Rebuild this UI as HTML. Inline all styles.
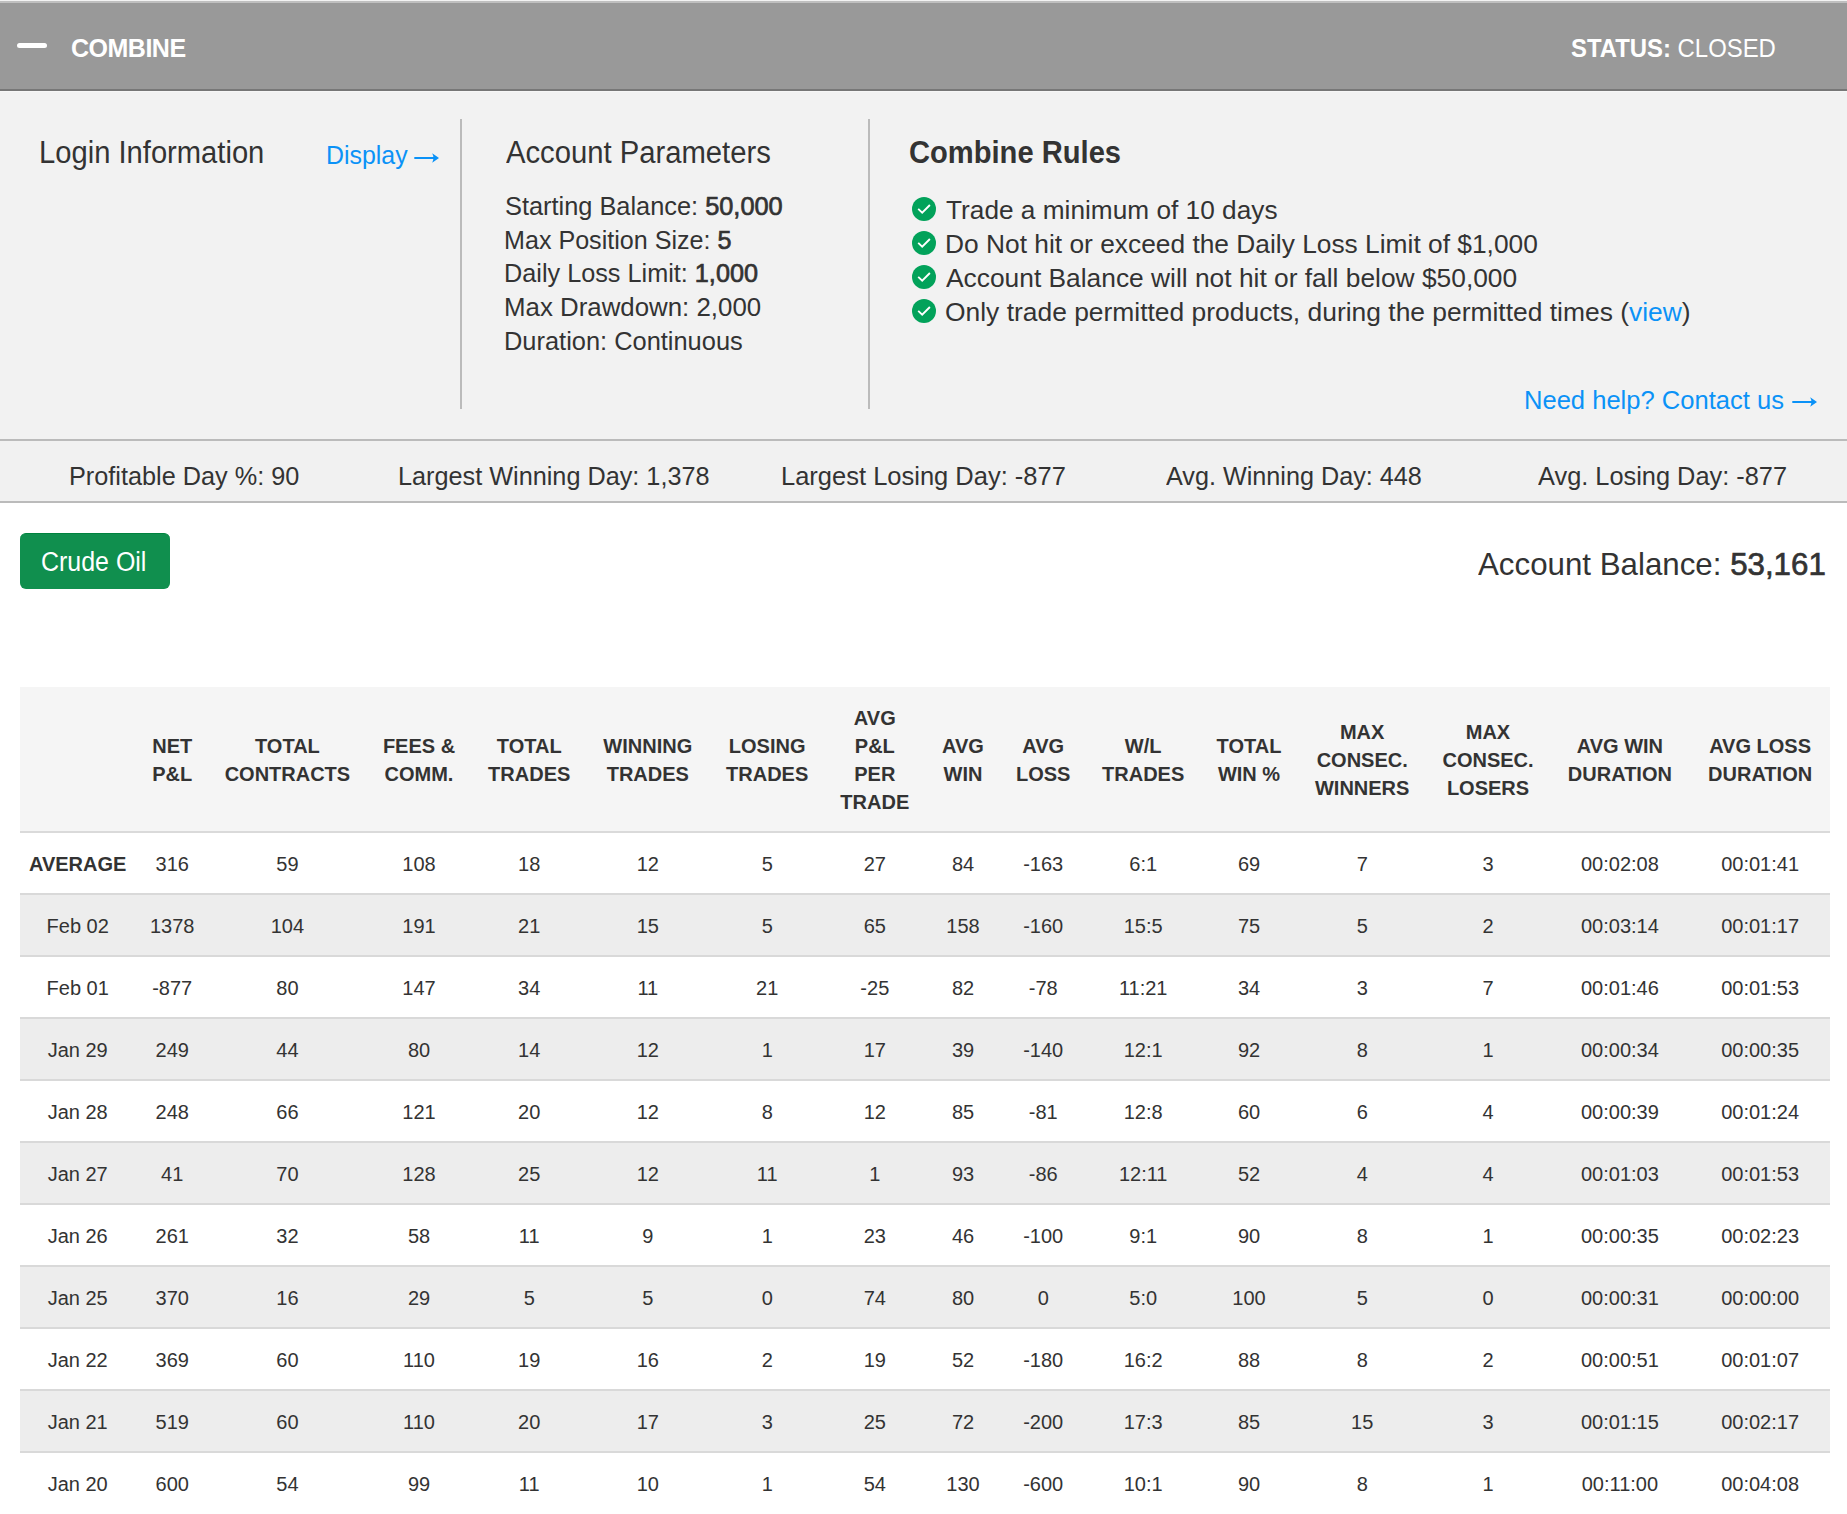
<!DOCTYPE html>
<html><head><meta charset="utf-8"><title>Combine</title><style>
*{margin:0;padding:0;box-sizing:border-box}
html,body{width:1847px;height:1514px;overflow:hidden;background:#fff;font-family:"Liberation Sans",sans-serif}
.t{position:absolute;white-space:nowrap}
.r{position:absolute;left:0;width:1847px}
b{font-weight:700}
.m{-webkit-text-stroke:0.7px currentColor}
</style></head>
<body>
<div class="r" style="top:0;height:1px;background:#f2f2f2"></div><div class="r" style="top:1px;height:2px;background:#bfbfbf"></div><div class="r" style="top:3px;height:86px;background:#999"></div><div class="r" style="top:89px;height:2px;background:#777"></div><div class="r" style="top:91px;height:1px;background:#f7f7f7"></div><div class="r" style="top:92px;height:347px;background:#f2f2f2"></div><div class="r" style="top:439px;height:2px;background:#bbb"></div><div class="r" style="top:441px;height:60px;background:#f1f1f1"></div><div class="r" style="top:501px;height:2px;background:#bbb"></div><div style="position:absolute;left:17px;top:42.5px;width:30px;height:5.5px;border-radius:3px;background:#fff"></div><div class="t" style="top:33.34px;font-size:25px;line-height:30px;font-weight:700;color:#fff;letter-spacing:-0.5px;left:71.00px;">COMBINE</div>
<div style="position:absolute;left:460px;top:119px;width:2px;height:290px;background:#bbb"></div><div style="position:absolute;left:868px;top:119px;width:2px;height:290px;background:#bbb"></div><svg style="position:absolute;left:912.3px;top:197.40px" width="24" height="24" viewBox="0 0 24 24"><circle cx="12" cy="12" r="12" fill="#02a25a"/><path d="M6.2 11.9 L10.2 15.6 L17.9 8" fill="none" stroke="#fff" stroke-width="1.9"/></svg>
<svg style="position:absolute;left:912.3px;top:231.40px" width="24" height="24" viewBox="0 0 24 24"><circle cx="12" cy="12" r="12" fill="#02a25a"/><path d="M6.2 11.9 L10.2 15.6 L17.9 8" fill="none" stroke="#fff" stroke-width="1.9"/></svg>
<svg style="position:absolute;left:912.3px;top:265.40px" width="24" height="24" viewBox="0 0 24 24"><circle cx="12" cy="12" r="12" fill="#02a25a"/><path d="M6.2 11.9 L10.2 15.6 L17.9 8" fill="none" stroke="#fff" stroke-width="1.9"/></svg>
<svg style="position:absolute;left:912.3px;top:299.40px" width="24" height="24" viewBox="0 0 24 24"><circle cx="12" cy="12" r="12" fill="#02a25a"/><path d="M6.2 11.9 L10.2 15.6 L17.9 8" fill="none" stroke="#fff" stroke-width="1.9"/></svg>
<div style="position:absolute;left:20px;top:533px;width:150px;height:56px;border-radius:6px;background:#108f4e;border-top:1px solid #00833e"></div><div class="t" style="top:33.34px;font-size:25px;line-height:30px;font-weight:400;color:#fff;left:1571.00px;transform:scaleX(0.9556);transform-origin:left center;"><b>STATUS:</b> CLOSED</div>
<div class="t" style="top:134.16px;font-size:31px;line-height:37px;font-weight:400;color:#333;left:38.53px;transform:scaleX(0.9407);transform-origin:left center;">Login Information</div>
<div class="t" style="top:140.09px;font-size:26px;line-height:31px;font-weight:400;color:#0b92f7;left:325.50px;transform:scaleX(0.9578);transform-origin:left center;">Display</div>
<div class="t" style="top:134.26px;font-size:31px;line-height:37px;font-weight:400;color:#333;left:506.00px;transform:scaleX(0.9429);transform-origin:left center;">Account Parameters</div>
<div class="t" style="top:190.59px;font-size:26px;line-height:31px;font-weight:400;color:#333;left:505.02px;transform:scaleX(0.9753);transform-origin:left center;">Starting Balance: <span class="m">50,000</span></div>
<div class="t" style="top:224.89px;font-size:26px;line-height:31px;font-weight:400;color:#333;left:504.07px;transform:scaleX(0.9657);transform-origin:left center;">Max Position Size: <span class="m">5</span></div>
<div class="t" style="top:258.49px;font-size:26px;line-height:31px;font-weight:400;color:#333;left:504.06px;transform:scaleX(0.9711);transform-origin:left center;">Daily Loss Limit: <span class="m">1,000</span></div>
<div class="t" style="top:292.19px;font-size:26px;line-height:31px;font-weight:400;color:#333;left:504.01px;transform:scaleX(0.9941);transform-origin:left center;">Max Drawdown: 2,000</div>
<div class="t" style="top:325.79px;font-size:26px;line-height:31px;font-weight:400;color:#333;left:504.05px;transform:scaleX(0.9773);transform-origin:left center;">Duration: Continuous</div>
<div class="t" style="top:134.36px;font-size:31px;line-height:37px;font-weight:700;color:#333;left:909.44px;transform:scaleX(0.9397);transform-origin:left center;">Combine Rules</div>
<div class="t" style="top:194.59px;font-size:26px;line-height:31px;font-weight:400;color:#333;left:946.20px;transform:scaleX(1.0092);transform-origin:left center;">Trade a minimum of 10 days</div>
<div class="t" style="top:228.59px;font-size:26px;line-height:31px;font-weight:400;color:#333;left:945.18px;transform:scaleX(1.0129);transform-origin:left center;">Do Not hit or exceed the Daily Loss Limit of $1,000</div>
<div class="t" style="top:262.59px;font-size:26px;line-height:31px;font-weight:400;color:#333;left:946.21px;transform:scaleX(1.0133);transform-origin:left center;">Account Balance will not hit or fall below $50,000</div>
<div class="t" style="top:296.59px;font-size:26px;line-height:31px;font-weight:400;color:#333;left:945.20px;transform:scaleX(1.0157);transform-origin:left center;">Only trade permitted products, during the permitted times (<span style="color:#0b92f7">view</span>)</div>
<div class="t" style="top:384.69px;font-size:26px;line-height:31px;font-weight:400;color:#0b92f7;left:1524.04px;transform:scaleX(0.9827);transform-origin:left center;">Need help? Contact us</div>
<div class="t" style="top:460.74px;font-size:25px;line-height:30px;font-weight:400;color:#333;left:68.98px;transform:scaleX(1.0111);transform-origin:left center;">Profitable Day %: 90</div>
<div class="t" style="top:460.74px;font-size:25px;line-height:30px;font-weight:400;color:#333;left:397.79px;transform:scaleX(1.0098);transform-origin:left center;">Largest Winning Day: 1,378</div>
<div class="t" style="top:460.74px;font-size:25px;line-height:30px;font-weight:400;color:#333;left:781.36px;transform:scaleX(1.0199);transform-origin:left center;">Largest Losing Day: -877</div>
<div class="t" style="top:460.74px;font-size:25px;line-height:30px;font-weight:400;color:#333;left:1165.80px;transform:scaleX(1.0079);transform-origin:left center;">Avg. Winning Day: 448</div>
<div class="t" style="top:460.74px;font-size:25px;line-height:30px;font-weight:400;color:#333;left:1538.41px;transform:scaleX(1.0143);transform-origin:left center;">Avg. Losing Day: -877</div>
<div class="t" style="top:545.64px;font-size:27px;line-height:32px;font-weight:400;color:#fff;left:40.86px;transform:scaleX(0.9241);transform-origin:left center;">Crude Oil</div>
<div class="t" style="top:545.01px;font-size:32px;line-height:38px;font-weight:400;color:#333;left:1477.99px;transform:scaleX(0.9775);transform-origin:left center;">Account Balance: <span class="m">53,161</span></div>
<svg style="position:absolute;left:413.00px;top:152.00px" width="27" height="12" viewBox="0 0 27 12"><path d="M1.3 5 H23.5 V7 H1.3 Z" fill="#0b92f7"/><path d="M19.2 1.2 L26 6 L19.2 10.8 Q21.6 6 19.2 1.2 Z" fill="#0b92f7"/></svg>
<svg style="position:absolute;left:1791.20px;top:396.00px" width="27" height="12" viewBox="0 0 27 12"><path d="M1.3 5 H23.5 V7 H1.3 Z" fill="#0b92f7"/><path d="M19.2 1.2 L26 6 L19.2 10.8 Q21.6 6 19.2 1.2 Z" fill="#0b92f7"/></svg>
<div style="position:absolute;left:20px;top:687px;width:1810px;height:144px;background:#f5f5f5"></div><div style="position:absolute;left:20px;top:831px;width:1810px;height:2px;background:#dadada"></div><div class="t" style="top:734.07px;font-size:20px;line-height:24px;font-weight:700;color:#333;left:-427.80px;width:1200px;text-align:center;">NET</div>
<div class="t" style="top:762.07px;font-size:20px;line-height:24px;font-weight:700;color:#333;left:-427.80px;width:1200px;text-align:center;">P&amp;L</div>
<div class="t" style="top:734.07px;font-size:20px;line-height:24px;font-weight:700;color:#333;left:-312.60px;width:1200px;text-align:center;">TOTAL</div>
<div class="t" style="top:762.07px;font-size:20px;line-height:24px;font-weight:700;color:#333;left:-312.60px;width:1200px;text-align:center;">CONTRACTS</div>
<div class="t" style="top:734.07px;font-size:20px;line-height:24px;font-weight:700;color:#333;left:-181.00px;width:1200px;text-align:center;">FEES &amp;</div>
<div class="t" style="top:762.07px;font-size:20px;line-height:24px;font-weight:700;color:#333;left:-181.00px;width:1200px;text-align:center;">COMM.</div>
<div class="t" style="top:734.07px;font-size:20px;line-height:24px;font-weight:700;color:#333;left:-70.80px;width:1200px;text-align:center;">TOTAL</div>
<div class="t" style="top:762.07px;font-size:20px;line-height:24px;font-weight:700;color:#333;left:-70.80px;width:1200px;text-align:center;">TRADES</div>
<div class="t" style="top:734.07px;font-size:20px;line-height:24px;font-weight:700;color:#333;left:47.80px;width:1200px;text-align:center;">WINNING</div>
<div class="t" style="top:762.07px;font-size:20px;line-height:24px;font-weight:700;color:#333;left:47.80px;width:1200px;text-align:center;">TRADES</div>
<div class="t" style="top:734.07px;font-size:20px;line-height:24px;font-weight:700;color:#333;left:167.20px;width:1200px;text-align:center;">LOSING</div>
<div class="t" style="top:762.07px;font-size:20px;line-height:24px;font-weight:700;color:#333;left:167.20px;width:1200px;text-align:center;">TRADES</div>
<div class="t" style="top:706.07px;font-size:20px;line-height:24px;font-weight:700;color:#333;left:274.80px;width:1200px;text-align:center;">AVG</div>
<div class="t" style="top:734.07px;font-size:20px;line-height:24px;font-weight:700;color:#333;left:274.80px;width:1200px;text-align:center;">P&amp;L</div>
<div class="t" style="top:762.07px;font-size:20px;line-height:24px;font-weight:700;color:#333;left:274.80px;width:1200px;text-align:center;">PER</div>
<div class="t" style="top:790.07px;font-size:20px;line-height:24px;font-weight:700;color:#333;left:274.80px;width:1200px;text-align:center;">TRADE</div>
<div class="t" style="top:734.07px;font-size:20px;line-height:24px;font-weight:700;color:#333;left:363.00px;width:1200px;text-align:center;">AVG</div>
<div class="t" style="top:762.07px;font-size:20px;line-height:24px;font-weight:700;color:#333;left:363.00px;width:1200px;text-align:center;">WIN</div>
<div class="t" style="top:734.07px;font-size:20px;line-height:24px;font-weight:700;color:#333;left:443.20px;width:1200px;text-align:center;">AVG</div>
<div class="t" style="top:762.07px;font-size:20px;line-height:24px;font-weight:700;color:#333;left:443.20px;width:1200px;text-align:center;">LOSS</div>
<div class="t" style="top:734.07px;font-size:20px;line-height:24px;font-weight:700;color:#333;left:543.20px;width:1200px;text-align:center;">W/L</div>
<div class="t" style="top:762.07px;font-size:20px;line-height:24px;font-weight:700;color:#333;left:543.20px;width:1200px;text-align:center;">TRADES</div>
<div class="t" style="top:734.07px;font-size:20px;line-height:24px;font-weight:700;color:#333;left:649.00px;width:1200px;text-align:center;">TOTAL</div>
<div class="t" style="top:762.07px;font-size:20px;line-height:24px;font-weight:700;color:#333;left:649.00px;width:1200px;text-align:center;">WIN %</div>
<div class="t" style="top:720.07px;font-size:20px;line-height:24px;font-weight:700;color:#333;left:762.20px;width:1200px;text-align:center;">MAX</div>
<div class="t" style="top:748.07px;font-size:20px;line-height:24px;font-weight:700;color:#333;left:762.20px;width:1200px;text-align:center;">CONSEC.</div>
<div class="t" style="top:776.07px;font-size:20px;line-height:24px;font-weight:700;color:#333;left:762.20px;width:1200px;text-align:center;">WINNERS</div>
<div class="t" style="top:720.07px;font-size:20px;line-height:24px;font-weight:700;color:#333;left:888.00px;width:1200px;text-align:center;">MAX</div>
<div class="t" style="top:748.07px;font-size:20px;line-height:24px;font-weight:700;color:#333;left:888.00px;width:1200px;text-align:center;">CONSEC.</div>
<div class="t" style="top:776.07px;font-size:20px;line-height:24px;font-weight:700;color:#333;left:888.00px;width:1200px;text-align:center;">LOSERS</div>
<div class="t" style="top:734.07px;font-size:20px;line-height:24px;font-weight:700;color:#333;left:1019.90px;width:1200px;text-align:center;">AVG WIN</div>
<div class="t" style="top:762.07px;font-size:20px;line-height:24px;font-weight:700;color:#333;left:1019.90px;width:1200px;text-align:center;">DURATION</div>
<div class="t" style="top:734.07px;font-size:20px;line-height:24px;font-weight:700;color:#333;left:1160.10px;width:1200px;text-align:center;">AVG LOSS</div>
<div class="t" style="top:762.07px;font-size:20px;line-height:24px;font-weight:700;color:#333;left:1160.10px;width:1200px;text-align:center;">DURATION</div>
<div style="position:absolute;left:20px;top:833px;width:1810px;height:60px;background:#fff"></div><div style="position:absolute;left:20px;top:893px;width:1810px;height:2px;background:#d9d9d9"></div><div class="t" style="top:852.07px;font-size:20px;line-height:24px;font-weight:700;color:#333;left:-522.30px;width:1200px;text-align:center;">AVERAGE</div>
<div class="t" style="top:852.07px;font-size:20px;line-height:24px;font-weight:400;color:#333;left:-427.80px;width:1200px;text-align:center;">316</div>
<div class="t" style="top:852.07px;font-size:20px;line-height:24px;font-weight:400;color:#333;left:-312.60px;width:1200px;text-align:center;">59</div>
<div class="t" style="top:852.07px;font-size:20px;line-height:24px;font-weight:400;color:#333;left:-181.00px;width:1200px;text-align:center;">108</div>
<div class="t" style="top:852.07px;font-size:20px;line-height:24px;font-weight:400;color:#333;left:-70.80px;width:1200px;text-align:center;">18</div>
<div class="t" style="top:852.07px;font-size:20px;line-height:24px;font-weight:400;color:#333;left:47.80px;width:1200px;text-align:center;">12</div>
<div class="t" style="top:852.07px;font-size:20px;line-height:24px;font-weight:400;color:#333;left:167.20px;width:1200px;text-align:center;">5</div>
<div class="t" style="top:852.07px;font-size:20px;line-height:24px;font-weight:400;color:#333;left:274.80px;width:1200px;text-align:center;">27</div>
<div class="t" style="top:852.07px;font-size:20px;line-height:24px;font-weight:400;color:#333;left:363.00px;width:1200px;text-align:center;">84</div>
<div class="t" style="top:852.07px;font-size:20px;line-height:24px;font-weight:400;color:#333;left:443.20px;width:1200px;text-align:center;">-163</div>
<div class="t" style="top:852.07px;font-size:20px;line-height:24px;font-weight:400;color:#333;left:543.20px;width:1200px;text-align:center;">6:1</div>
<div class="t" style="top:852.07px;font-size:20px;line-height:24px;font-weight:400;color:#333;left:649.00px;width:1200px;text-align:center;">69</div>
<div class="t" style="top:852.07px;font-size:20px;line-height:24px;font-weight:400;color:#333;left:762.20px;width:1200px;text-align:center;">7</div>
<div class="t" style="top:852.07px;font-size:20px;line-height:24px;font-weight:400;color:#333;left:888.00px;width:1200px;text-align:center;">3</div>
<div class="t" style="top:852.07px;font-size:20px;line-height:24px;font-weight:400;color:#333;left:1019.90px;width:1200px;text-align:center;">00:02:08</div>
<div class="t" style="top:852.07px;font-size:20px;line-height:24px;font-weight:400;color:#333;left:1160.10px;width:1200px;text-align:center;">00:01:41</div>
<div style="position:absolute;left:20px;top:895px;width:1810px;height:60px;background:#ededed"></div><div style="position:absolute;left:20px;top:955px;width:1810px;height:2px;background:#d9d9d9"></div><div class="t" style="top:914.07px;font-size:20px;line-height:24px;font-weight:400;color:#333;left:-522.30px;width:1200px;text-align:center;">Feb 02</div>
<div class="t" style="top:914.07px;font-size:20px;line-height:24px;font-weight:400;color:#333;left:-427.80px;width:1200px;text-align:center;">1378</div>
<div class="t" style="top:914.07px;font-size:20px;line-height:24px;font-weight:400;color:#333;left:-312.60px;width:1200px;text-align:center;">104</div>
<div class="t" style="top:914.07px;font-size:20px;line-height:24px;font-weight:400;color:#333;left:-181.00px;width:1200px;text-align:center;">191</div>
<div class="t" style="top:914.07px;font-size:20px;line-height:24px;font-weight:400;color:#333;left:-70.80px;width:1200px;text-align:center;">21</div>
<div class="t" style="top:914.07px;font-size:20px;line-height:24px;font-weight:400;color:#333;left:47.80px;width:1200px;text-align:center;">15</div>
<div class="t" style="top:914.07px;font-size:20px;line-height:24px;font-weight:400;color:#333;left:167.20px;width:1200px;text-align:center;">5</div>
<div class="t" style="top:914.07px;font-size:20px;line-height:24px;font-weight:400;color:#333;left:274.80px;width:1200px;text-align:center;">65</div>
<div class="t" style="top:914.07px;font-size:20px;line-height:24px;font-weight:400;color:#333;left:363.00px;width:1200px;text-align:center;">158</div>
<div class="t" style="top:914.07px;font-size:20px;line-height:24px;font-weight:400;color:#333;left:443.20px;width:1200px;text-align:center;">-160</div>
<div class="t" style="top:914.07px;font-size:20px;line-height:24px;font-weight:400;color:#333;left:543.20px;width:1200px;text-align:center;">15:5</div>
<div class="t" style="top:914.07px;font-size:20px;line-height:24px;font-weight:400;color:#333;left:649.00px;width:1200px;text-align:center;">75</div>
<div class="t" style="top:914.07px;font-size:20px;line-height:24px;font-weight:400;color:#333;left:762.20px;width:1200px;text-align:center;">5</div>
<div class="t" style="top:914.07px;font-size:20px;line-height:24px;font-weight:400;color:#333;left:888.00px;width:1200px;text-align:center;">2</div>
<div class="t" style="top:914.07px;font-size:20px;line-height:24px;font-weight:400;color:#333;left:1019.90px;width:1200px;text-align:center;">00:03:14</div>
<div class="t" style="top:914.07px;font-size:20px;line-height:24px;font-weight:400;color:#333;left:1160.10px;width:1200px;text-align:center;">00:01:17</div>
<div style="position:absolute;left:20px;top:957px;width:1810px;height:60px;background:#fff"></div><div style="position:absolute;left:20px;top:1017px;width:1810px;height:2px;background:#d9d9d9"></div><div class="t" style="top:976.07px;font-size:20px;line-height:24px;font-weight:400;color:#333;left:-522.30px;width:1200px;text-align:center;">Feb 01</div>
<div class="t" style="top:976.07px;font-size:20px;line-height:24px;font-weight:400;color:#333;left:-427.80px;width:1200px;text-align:center;">-877</div>
<div class="t" style="top:976.07px;font-size:20px;line-height:24px;font-weight:400;color:#333;left:-312.60px;width:1200px;text-align:center;">80</div>
<div class="t" style="top:976.07px;font-size:20px;line-height:24px;font-weight:400;color:#333;left:-181.00px;width:1200px;text-align:center;">147</div>
<div class="t" style="top:976.07px;font-size:20px;line-height:24px;font-weight:400;color:#333;left:-70.80px;width:1200px;text-align:center;">34</div>
<div class="t" style="top:976.07px;font-size:20px;line-height:24px;font-weight:400;color:#333;left:47.80px;width:1200px;text-align:center;">11</div>
<div class="t" style="top:976.07px;font-size:20px;line-height:24px;font-weight:400;color:#333;left:167.20px;width:1200px;text-align:center;">21</div>
<div class="t" style="top:976.07px;font-size:20px;line-height:24px;font-weight:400;color:#333;left:274.80px;width:1200px;text-align:center;">-25</div>
<div class="t" style="top:976.07px;font-size:20px;line-height:24px;font-weight:400;color:#333;left:363.00px;width:1200px;text-align:center;">82</div>
<div class="t" style="top:976.07px;font-size:20px;line-height:24px;font-weight:400;color:#333;left:443.20px;width:1200px;text-align:center;">-78</div>
<div class="t" style="top:976.07px;font-size:20px;line-height:24px;font-weight:400;color:#333;left:543.20px;width:1200px;text-align:center;">11:21</div>
<div class="t" style="top:976.07px;font-size:20px;line-height:24px;font-weight:400;color:#333;left:649.00px;width:1200px;text-align:center;">34</div>
<div class="t" style="top:976.07px;font-size:20px;line-height:24px;font-weight:400;color:#333;left:762.20px;width:1200px;text-align:center;">3</div>
<div class="t" style="top:976.07px;font-size:20px;line-height:24px;font-weight:400;color:#333;left:888.00px;width:1200px;text-align:center;">7</div>
<div class="t" style="top:976.07px;font-size:20px;line-height:24px;font-weight:400;color:#333;left:1019.90px;width:1200px;text-align:center;">00:01:46</div>
<div class="t" style="top:976.07px;font-size:20px;line-height:24px;font-weight:400;color:#333;left:1160.10px;width:1200px;text-align:center;">00:01:53</div>
<div style="position:absolute;left:20px;top:1019px;width:1810px;height:60px;background:#ededed"></div><div style="position:absolute;left:20px;top:1079px;width:1810px;height:2px;background:#d9d9d9"></div><div class="t" style="top:1038.07px;font-size:20px;line-height:24px;font-weight:400;color:#333;left:-522.30px;width:1200px;text-align:center;">Jan 29</div>
<div class="t" style="top:1038.07px;font-size:20px;line-height:24px;font-weight:400;color:#333;left:-427.80px;width:1200px;text-align:center;">249</div>
<div class="t" style="top:1038.07px;font-size:20px;line-height:24px;font-weight:400;color:#333;left:-312.60px;width:1200px;text-align:center;">44</div>
<div class="t" style="top:1038.07px;font-size:20px;line-height:24px;font-weight:400;color:#333;left:-181.00px;width:1200px;text-align:center;">80</div>
<div class="t" style="top:1038.07px;font-size:20px;line-height:24px;font-weight:400;color:#333;left:-70.80px;width:1200px;text-align:center;">14</div>
<div class="t" style="top:1038.07px;font-size:20px;line-height:24px;font-weight:400;color:#333;left:47.80px;width:1200px;text-align:center;">12</div>
<div class="t" style="top:1038.07px;font-size:20px;line-height:24px;font-weight:400;color:#333;left:167.20px;width:1200px;text-align:center;">1</div>
<div class="t" style="top:1038.07px;font-size:20px;line-height:24px;font-weight:400;color:#333;left:274.80px;width:1200px;text-align:center;">17</div>
<div class="t" style="top:1038.07px;font-size:20px;line-height:24px;font-weight:400;color:#333;left:363.00px;width:1200px;text-align:center;">39</div>
<div class="t" style="top:1038.07px;font-size:20px;line-height:24px;font-weight:400;color:#333;left:443.20px;width:1200px;text-align:center;">-140</div>
<div class="t" style="top:1038.07px;font-size:20px;line-height:24px;font-weight:400;color:#333;left:543.20px;width:1200px;text-align:center;">12:1</div>
<div class="t" style="top:1038.07px;font-size:20px;line-height:24px;font-weight:400;color:#333;left:649.00px;width:1200px;text-align:center;">92</div>
<div class="t" style="top:1038.07px;font-size:20px;line-height:24px;font-weight:400;color:#333;left:762.20px;width:1200px;text-align:center;">8</div>
<div class="t" style="top:1038.07px;font-size:20px;line-height:24px;font-weight:400;color:#333;left:888.00px;width:1200px;text-align:center;">1</div>
<div class="t" style="top:1038.07px;font-size:20px;line-height:24px;font-weight:400;color:#333;left:1019.90px;width:1200px;text-align:center;">00:00:34</div>
<div class="t" style="top:1038.07px;font-size:20px;line-height:24px;font-weight:400;color:#333;left:1160.10px;width:1200px;text-align:center;">00:00:35</div>
<div style="position:absolute;left:20px;top:1081px;width:1810px;height:60px;background:#fff"></div><div style="position:absolute;left:20px;top:1141px;width:1810px;height:2px;background:#d9d9d9"></div><div class="t" style="top:1100.07px;font-size:20px;line-height:24px;font-weight:400;color:#333;left:-522.30px;width:1200px;text-align:center;">Jan 28</div>
<div class="t" style="top:1100.07px;font-size:20px;line-height:24px;font-weight:400;color:#333;left:-427.80px;width:1200px;text-align:center;">248</div>
<div class="t" style="top:1100.07px;font-size:20px;line-height:24px;font-weight:400;color:#333;left:-312.60px;width:1200px;text-align:center;">66</div>
<div class="t" style="top:1100.07px;font-size:20px;line-height:24px;font-weight:400;color:#333;left:-181.00px;width:1200px;text-align:center;">121</div>
<div class="t" style="top:1100.07px;font-size:20px;line-height:24px;font-weight:400;color:#333;left:-70.80px;width:1200px;text-align:center;">20</div>
<div class="t" style="top:1100.07px;font-size:20px;line-height:24px;font-weight:400;color:#333;left:47.80px;width:1200px;text-align:center;">12</div>
<div class="t" style="top:1100.07px;font-size:20px;line-height:24px;font-weight:400;color:#333;left:167.20px;width:1200px;text-align:center;">8</div>
<div class="t" style="top:1100.07px;font-size:20px;line-height:24px;font-weight:400;color:#333;left:274.80px;width:1200px;text-align:center;">12</div>
<div class="t" style="top:1100.07px;font-size:20px;line-height:24px;font-weight:400;color:#333;left:363.00px;width:1200px;text-align:center;">85</div>
<div class="t" style="top:1100.07px;font-size:20px;line-height:24px;font-weight:400;color:#333;left:443.20px;width:1200px;text-align:center;">-81</div>
<div class="t" style="top:1100.07px;font-size:20px;line-height:24px;font-weight:400;color:#333;left:543.20px;width:1200px;text-align:center;">12:8</div>
<div class="t" style="top:1100.07px;font-size:20px;line-height:24px;font-weight:400;color:#333;left:649.00px;width:1200px;text-align:center;">60</div>
<div class="t" style="top:1100.07px;font-size:20px;line-height:24px;font-weight:400;color:#333;left:762.20px;width:1200px;text-align:center;">6</div>
<div class="t" style="top:1100.07px;font-size:20px;line-height:24px;font-weight:400;color:#333;left:888.00px;width:1200px;text-align:center;">4</div>
<div class="t" style="top:1100.07px;font-size:20px;line-height:24px;font-weight:400;color:#333;left:1019.90px;width:1200px;text-align:center;">00:00:39</div>
<div class="t" style="top:1100.07px;font-size:20px;line-height:24px;font-weight:400;color:#333;left:1160.10px;width:1200px;text-align:center;">00:01:24</div>
<div style="position:absolute;left:20px;top:1143px;width:1810px;height:60px;background:#ededed"></div><div style="position:absolute;left:20px;top:1203px;width:1810px;height:2px;background:#d9d9d9"></div><div class="t" style="top:1162.07px;font-size:20px;line-height:24px;font-weight:400;color:#333;left:-522.30px;width:1200px;text-align:center;">Jan 27</div>
<div class="t" style="top:1162.07px;font-size:20px;line-height:24px;font-weight:400;color:#333;left:-427.80px;width:1200px;text-align:center;">41</div>
<div class="t" style="top:1162.07px;font-size:20px;line-height:24px;font-weight:400;color:#333;left:-312.60px;width:1200px;text-align:center;">70</div>
<div class="t" style="top:1162.07px;font-size:20px;line-height:24px;font-weight:400;color:#333;left:-181.00px;width:1200px;text-align:center;">128</div>
<div class="t" style="top:1162.07px;font-size:20px;line-height:24px;font-weight:400;color:#333;left:-70.80px;width:1200px;text-align:center;">25</div>
<div class="t" style="top:1162.07px;font-size:20px;line-height:24px;font-weight:400;color:#333;left:47.80px;width:1200px;text-align:center;">12</div>
<div class="t" style="top:1162.07px;font-size:20px;line-height:24px;font-weight:400;color:#333;left:167.20px;width:1200px;text-align:center;">11</div>
<div class="t" style="top:1162.07px;font-size:20px;line-height:24px;font-weight:400;color:#333;left:274.80px;width:1200px;text-align:center;">1</div>
<div class="t" style="top:1162.07px;font-size:20px;line-height:24px;font-weight:400;color:#333;left:363.00px;width:1200px;text-align:center;">93</div>
<div class="t" style="top:1162.07px;font-size:20px;line-height:24px;font-weight:400;color:#333;left:443.20px;width:1200px;text-align:center;">-86</div>
<div class="t" style="top:1162.07px;font-size:20px;line-height:24px;font-weight:400;color:#333;left:543.20px;width:1200px;text-align:center;">12:11</div>
<div class="t" style="top:1162.07px;font-size:20px;line-height:24px;font-weight:400;color:#333;left:649.00px;width:1200px;text-align:center;">52</div>
<div class="t" style="top:1162.07px;font-size:20px;line-height:24px;font-weight:400;color:#333;left:762.20px;width:1200px;text-align:center;">4</div>
<div class="t" style="top:1162.07px;font-size:20px;line-height:24px;font-weight:400;color:#333;left:888.00px;width:1200px;text-align:center;">4</div>
<div class="t" style="top:1162.07px;font-size:20px;line-height:24px;font-weight:400;color:#333;left:1019.90px;width:1200px;text-align:center;">00:01:03</div>
<div class="t" style="top:1162.07px;font-size:20px;line-height:24px;font-weight:400;color:#333;left:1160.10px;width:1200px;text-align:center;">00:01:53</div>
<div style="position:absolute;left:20px;top:1205px;width:1810px;height:60px;background:#fff"></div><div style="position:absolute;left:20px;top:1265px;width:1810px;height:2px;background:#d9d9d9"></div><div class="t" style="top:1224.07px;font-size:20px;line-height:24px;font-weight:400;color:#333;left:-522.30px;width:1200px;text-align:center;">Jan 26</div>
<div class="t" style="top:1224.07px;font-size:20px;line-height:24px;font-weight:400;color:#333;left:-427.80px;width:1200px;text-align:center;">261</div>
<div class="t" style="top:1224.07px;font-size:20px;line-height:24px;font-weight:400;color:#333;left:-312.60px;width:1200px;text-align:center;">32</div>
<div class="t" style="top:1224.07px;font-size:20px;line-height:24px;font-weight:400;color:#333;left:-181.00px;width:1200px;text-align:center;">58</div>
<div class="t" style="top:1224.07px;font-size:20px;line-height:24px;font-weight:400;color:#333;left:-70.80px;width:1200px;text-align:center;">11</div>
<div class="t" style="top:1224.07px;font-size:20px;line-height:24px;font-weight:400;color:#333;left:47.80px;width:1200px;text-align:center;">9</div>
<div class="t" style="top:1224.07px;font-size:20px;line-height:24px;font-weight:400;color:#333;left:167.20px;width:1200px;text-align:center;">1</div>
<div class="t" style="top:1224.07px;font-size:20px;line-height:24px;font-weight:400;color:#333;left:274.80px;width:1200px;text-align:center;">23</div>
<div class="t" style="top:1224.07px;font-size:20px;line-height:24px;font-weight:400;color:#333;left:363.00px;width:1200px;text-align:center;">46</div>
<div class="t" style="top:1224.07px;font-size:20px;line-height:24px;font-weight:400;color:#333;left:443.20px;width:1200px;text-align:center;">-100</div>
<div class="t" style="top:1224.07px;font-size:20px;line-height:24px;font-weight:400;color:#333;left:543.20px;width:1200px;text-align:center;">9:1</div>
<div class="t" style="top:1224.07px;font-size:20px;line-height:24px;font-weight:400;color:#333;left:649.00px;width:1200px;text-align:center;">90</div>
<div class="t" style="top:1224.07px;font-size:20px;line-height:24px;font-weight:400;color:#333;left:762.20px;width:1200px;text-align:center;">8</div>
<div class="t" style="top:1224.07px;font-size:20px;line-height:24px;font-weight:400;color:#333;left:888.00px;width:1200px;text-align:center;">1</div>
<div class="t" style="top:1224.07px;font-size:20px;line-height:24px;font-weight:400;color:#333;left:1019.90px;width:1200px;text-align:center;">00:00:35</div>
<div class="t" style="top:1224.07px;font-size:20px;line-height:24px;font-weight:400;color:#333;left:1160.10px;width:1200px;text-align:center;">00:02:23</div>
<div style="position:absolute;left:20px;top:1267px;width:1810px;height:60px;background:#ededed"></div><div style="position:absolute;left:20px;top:1327px;width:1810px;height:2px;background:#d9d9d9"></div><div class="t" style="top:1286.07px;font-size:20px;line-height:24px;font-weight:400;color:#333;left:-522.30px;width:1200px;text-align:center;">Jan 25</div>
<div class="t" style="top:1286.07px;font-size:20px;line-height:24px;font-weight:400;color:#333;left:-427.80px;width:1200px;text-align:center;">370</div>
<div class="t" style="top:1286.07px;font-size:20px;line-height:24px;font-weight:400;color:#333;left:-312.60px;width:1200px;text-align:center;">16</div>
<div class="t" style="top:1286.07px;font-size:20px;line-height:24px;font-weight:400;color:#333;left:-181.00px;width:1200px;text-align:center;">29</div>
<div class="t" style="top:1286.07px;font-size:20px;line-height:24px;font-weight:400;color:#333;left:-70.80px;width:1200px;text-align:center;">5</div>
<div class="t" style="top:1286.07px;font-size:20px;line-height:24px;font-weight:400;color:#333;left:47.80px;width:1200px;text-align:center;">5</div>
<div class="t" style="top:1286.07px;font-size:20px;line-height:24px;font-weight:400;color:#333;left:167.20px;width:1200px;text-align:center;">0</div>
<div class="t" style="top:1286.07px;font-size:20px;line-height:24px;font-weight:400;color:#333;left:274.80px;width:1200px;text-align:center;">74</div>
<div class="t" style="top:1286.07px;font-size:20px;line-height:24px;font-weight:400;color:#333;left:363.00px;width:1200px;text-align:center;">80</div>
<div class="t" style="top:1286.07px;font-size:20px;line-height:24px;font-weight:400;color:#333;left:443.20px;width:1200px;text-align:center;">0</div>
<div class="t" style="top:1286.07px;font-size:20px;line-height:24px;font-weight:400;color:#333;left:543.20px;width:1200px;text-align:center;">5:0</div>
<div class="t" style="top:1286.07px;font-size:20px;line-height:24px;font-weight:400;color:#333;left:649.00px;width:1200px;text-align:center;">100</div>
<div class="t" style="top:1286.07px;font-size:20px;line-height:24px;font-weight:400;color:#333;left:762.20px;width:1200px;text-align:center;">5</div>
<div class="t" style="top:1286.07px;font-size:20px;line-height:24px;font-weight:400;color:#333;left:888.00px;width:1200px;text-align:center;">0</div>
<div class="t" style="top:1286.07px;font-size:20px;line-height:24px;font-weight:400;color:#333;left:1019.90px;width:1200px;text-align:center;">00:00:31</div>
<div class="t" style="top:1286.07px;font-size:20px;line-height:24px;font-weight:400;color:#333;left:1160.10px;width:1200px;text-align:center;">00:00:00</div>
<div style="position:absolute;left:20px;top:1329px;width:1810px;height:60px;background:#fff"></div><div style="position:absolute;left:20px;top:1389px;width:1810px;height:2px;background:#d9d9d9"></div><div class="t" style="top:1348.07px;font-size:20px;line-height:24px;font-weight:400;color:#333;left:-522.30px;width:1200px;text-align:center;">Jan 22</div>
<div class="t" style="top:1348.07px;font-size:20px;line-height:24px;font-weight:400;color:#333;left:-427.80px;width:1200px;text-align:center;">369</div>
<div class="t" style="top:1348.07px;font-size:20px;line-height:24px;font-weight:400;color:#333;left:-312.60px;width:1200px;text-align:center;">60</div>
<div class="t" style="top:1348.07px;font-size:20px;line-height:24px;font-weight:400;color:#333;left:-181.00px;width:1200px;text-align:center;">110</div>
<div class="t" style="top:1348.07px;font-size:20px;line-height:24px;font-weight:400;color:#333;left:-70.80px;width:1200px;text-align:center;">19</div>
<div class="t" style="top:1348.07px;font-size:20px;line-height:24px;font-weight:400;color:#333;left:47.80px;width:1200px;text-align:center;">16</div>
<div class="t" style="top:1348.07px;font-size:20px;line-height:24px;font-weight:400;color:#333;left:167.20px;width:1200px;text-align:center;">2</div>
<div class="t" style="top:1348.07px;font-size:20px;line-height:24px;font-weight:400;color:#333;left:274.80px;width:1200px;text-align:center;">19</div>
<div class="t" style="top:1348.07px;font-size:20px;line-height:24px;font-weight:400;color:#333;left:363.00px;width:1200px;text-align:center;">52</div>
<div class="t" style="top:1348.07px;font-size:20px;line-height:24px;font-weight:400;color:#333;left:443.20px;width:1200px;text-align:center;">-180</div>
<div class="t" style="top:1348.07px;font-size:20px;line-height:24px;font-weight:400;color:#333;left:543.20px;width:1200px;text-align:center;">16:2</div>
<div class="t" style="top:1348.07px;font-size:20px;line-height:24px;font-weight:400;color:#333;left:649.00px;width:1200px;text-align:center;">88</div>
<div class="t" style="top:1348.07px;font-size:20px;line-height:24px;font-weight:400;color:#333;left:762.20px;width:1200px;text-align:center;">8</div>
<div class="t" style="top:1348.07px;font-size:20px;line-height:24px;font-weight:400;color:#333;left:888.00px;width:1200px;text-align:center;">2</div>
<div class="t" style="top:1348.07px;font-size:20px;line-height:24px;font-weight:400;color:#333;left:1019.90px;width:1200px;text-align:center;">00:00:51</div>
<div class="t" style="top:1348.07px;font-size:20px;line-height:24px;font-weight:400;color:#333;left:1160.10px;width:1200px;text-align:center;">00:01:07</div>
<div style="position:absolute;left:20px;top:1391px;width:1810px;height:60px;background:#ededed"></div><div style="position:absolute;left:20px;top:1451px;width:1810px;height:2px;background:#d9d9d9"></div><div class="t" style="top:1410.07px;font-size:20px;line-height:24px;font-weight:400;color:#333;left:-522.30px;width:1200px;text-align:center;">Jan 21</div>
<div class="t" style="top:1410.07px;font-size:20px;line-height:24px;font-weight:400;color:#333;left:-427.80px;width:1200px;text-align:center;">519</div>
<div class="t" style="top:1410.07px;font-size:20px;line-height:24px;font-weight:400;color:#333;left:-312.60px;width:1200px;text-align:center;">60</div>
<div class="t" style="top:1410.07px;font-size:20px;line-height:24px;font-weight:400;color:#333;left:-181.00px;width:1200px;text-align:center;">110</div>
<div class="t" style="top:1410.07px;font-size:20px;line-height:24px;font-weight:400;color:#333;left:-70.80px;width:1200px;text-align:center;">20</div>
<div class="t" style="top:1410.07px;font-size:20px;line-height:24px;font-weight:400;color:#333;left:47.80px;width:1200px;text-align:center;">17</div>
<div class="t" style="top:1410.07px;font-size:20px;line-height:24px;font-weight:400;color:#333;left:167.20px;width:1200px;text-align:center;">3</div>
<div class="t" style="top:1410.07px;font-size:20px;line-height:24px;font-weight:400;color:#333;left:274.80px;width:1200px;text-align:center;">25</div>
<div class="t" style="top:1410.07px;font-size:20px;line-height:24px;font-weight:400;color:#333;left:363.00px;width:1200px;text-align:center;">72</div>
<div class="t" style="top:1410.07px;font-size:20px;line-height:24px;font-weight:400;color:#333;left:443.20px;width:1200px;text-align:center;">-200</div>
<div class="t" style="top:1410.07px;font-size:20px;line-height:24px;font-weight:400;color:#333;left:543.20px;width:1200px;text-align:center;">17:3</div>
<div class="t" style="top:1410.07px;font-size:20px;line-height:24px;font-weight:400;color:#333;left:649.00px;width:1200px;text-align:center;">85</div>
<div class="t" style="top:1410.07px;font-size:20px;line-height:24px;font-weight:400;color:#333;left:762.20px;width:1200px;text-align:center;">15</div>
<div class="t" style="top:1410.07px;font-size:20px;line-height:24px;font-weight:400;color:#333;left:888.00px;width:1200px;text-align:center;">3</div>
<div class="t" style="top:1410.07px;font-size:20px;line-height:24px;font-weight:400;color:#333;left:1019.90px;width:1200px;text-align:center;">00:01:15</div>
<div class="t" style="top:1410.07px;font-size:20px;line-height:24px;font-weight:400;color:#333;left:1160.10px;width:1200px;text-align:center;">00:02:17</div>
<div style="position:absolute;left:20px;top:1453px;width:1810px;height:60px;background:#fff"></div><div class="t" style="top:1472.07px;font-size:20px;line-height:24px;font-weight:400;color:#333;left:-522.30px;width:1200px;text-align:center;">Jan 20</div>
<div class="t" style="top:1472.07px;font-size:20px;line-height:24px;font-weight:400;color:#333;left:-427.80px;width:1200px;text-align:center;">600</div>
<div class="t" style="top:1472.07px;font-size:20px;line-height:24px;font-weight:400;color:#333;left:-312.60px;width:1200px;text-align:center;">54</div>
<div class="t" style="top:1472.07px;font-size:20px;line-height:24px;font-weight:400;color:#333;left:-181.00px;width:1200px;text-align:center;">99</div>
<div class="t" style="top:1472.07px;font-size:20px;line-height:24px;font-weight:400;color:#333;left:-70.80px;width:1200px;text-align:center;">11</div>
<div class="t" style="top:1472.07px;font-size:20px;line-height:24px;font-weight:400;color:#333;left:47.80px;width:1200px;text-align:center;">10</div>
<div class="t" style="top:1472.07px;font-size:20px;line-height:24px;font-weight:400;color:#333;left:167.20px;width:1200px;text-align:center;">1</div>
<div class="t" style="top:1472.07px;font-size:20px;line-height:24px;font-weight:400;color:#333;left:274.80px;width:1200px;text-align:center;">54</div>
<div class="t" style="top:1472.07px;font-size:20px;line-height:24px;font-weight:400;color:#333;left:363.00px;width:1200px;text-align:center;">130</div>
<div class="t" style="top:1472.07px;font-size:20px;line-height:24px;font-weight:400;color:#333;left:443.20px;width:1200px;text-align:center;">-600</div>
<div class="t" style="top:1472.07px;font-size:20px;line-height:24px;font-weight:400;color:#333;left:543.20px;width:1200px;text-align:center;">10:1</div>
<div class="t" style="top:1472.07px;font-size:20px;line-height:24px;font-weight:400;color:#333;left:649.00px;width:1200px;text-align:center;">90</div>
<div class="t" style="top:1472.07px;font-size:20px;line-height:24px;font-weight:400;color:#333;left:762.20px;width:1200px;text-align:center;">8</div>
<div class="t" style="top:1472.07px;font-size:20px;line-height:24px;font-weight:400;color:#333;left:888.00px;width:1200px;text-align:center;">1</div>
<div class="t" style="top:1472.07px;font-size:20px;line-height:24px;font-weight:400;color:#333;left:1019.90px;width:1200px;text-align:center;">00:11:00</div>
<div class="t" style="top:1472.07px;font-size:20px;line-height:24px;font-weight:400;color:#333;left:1160.10px;width:1200px;text-align:center;">00:04:08</div>

</body></html>
